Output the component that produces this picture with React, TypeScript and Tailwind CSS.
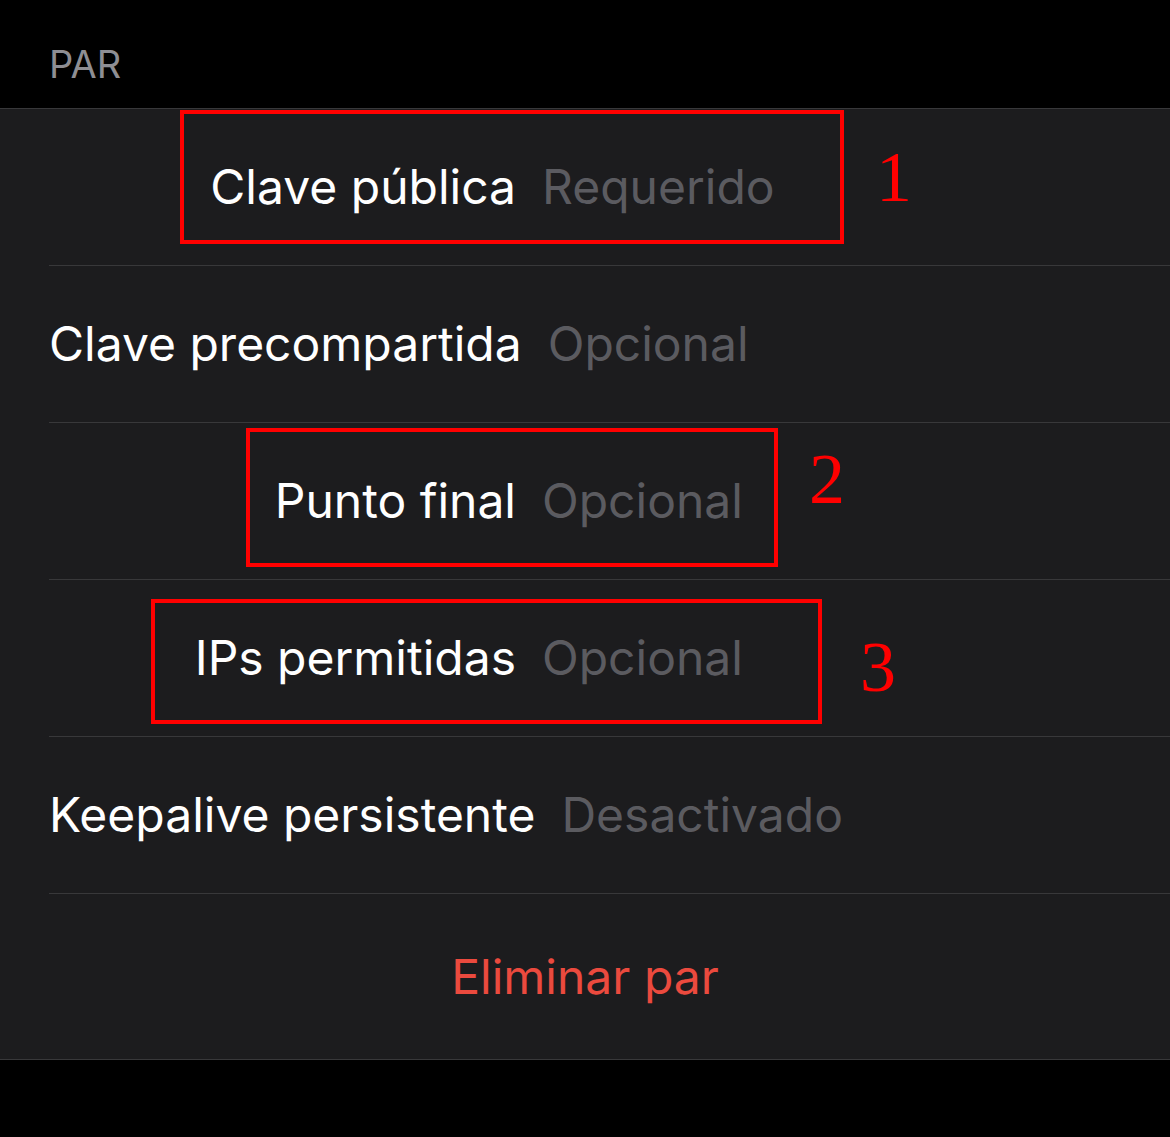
import React from 'react';

type Row = { label: string; value: string; aligned: boolean };

const rows: Row[] = [
  { label: 'Clave pública', value: 'Requerido', aligned: true },
  { label: 'Clave precompartida', value: 'Opcional', aligned: false },
  { label: 'Punto final', value: 'Opcional', aligned: true },
  { label: 'IPs permitidas', value: 'Opcional', aligned: true },
  { label: 'Keepalive persistente', value: 'Desactivado', aligned: false },
];

function FieldRow({ row }: { row: Row }) {
  return (
    <div className="ml-[49px] h-[157px] flex items-center gap-[26px] border-b border-[#38383a] text-[48px] leading-none">
      <span className={row.aligned ? 'w-[467px] text-right text-white' : 'text-white'}>
        {row.label}
      </span>
      <span className="text-[#5b5b60]">{row.value}</span>
    </div>
  );
}

export default function App() {
  return (
    <div className="relative w-[1170px] h-[1137px] bg-black font-['Inter',sans-serif] overflow-hidden">
      {/* Section header */}
      <div className="h-[108px] flex items-center pt-[20px] pl-[49px] text-[38px] text-[#8e8e93]">
        PAR
      </div>

      {/* Peer fields */}
      <div className="bg-[#1c1c1e] border-t border-b border-[#38383a]">
        {rows.map((row) => (
          <FieldRow key={row.label} row={row} />
        ))}
        <div className="h-[165px] flex items-center justify-center text-[48px] leading-none text-[#eb4a3e]">
          Eliminar par
        </div>
      </div>

      {/* Annotations */}
      <div className="absolute left-[180px] top-[110px] w-[664px] h-[134px] border-4 border-[#ff0000]" />
      <div className="absolute left-[246px] top-[428px] w-[532px] h-[139px] border-4 border-[#ff0000]" />
      <div className="absolute left-[151px] top-[599px] w-[671px] h-[125px] border-4 border-[#ff0000]" />
      <span className="absolute left-[876px] top-[141px] text-[72px] leading-none text-[#ff0000] font-['Liberation_Serif',serif]">1</span>
      <span className="absolute left-[809px] top-[443px] text-[72px] leading-none text-[#ff0000] font-['Liberation_Serif',serif]">2</span>
      <span className="absolute left-[860px] top-[631px] text-[72px] leading-none text-[#ff0000] font-['Liberation_Serif',serif]">3</span>
    </div>
  );
}
